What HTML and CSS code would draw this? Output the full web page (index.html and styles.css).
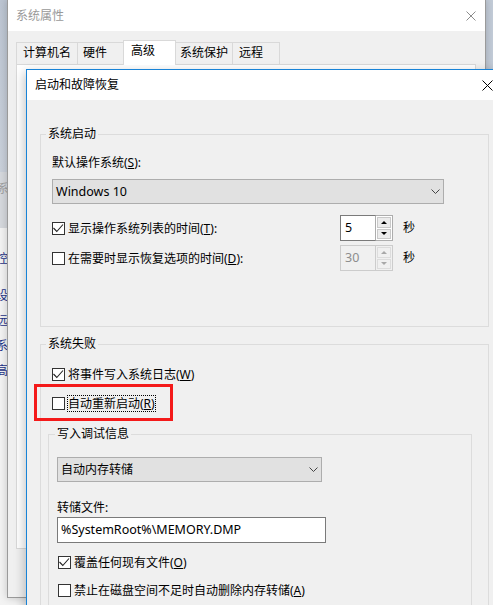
FILE: index.html
```html
<!DOCTYPE html>
<html lang="zh-CN">

<head>
    <meta charset="UTF-8">
    <meta name="viewport" content="width=device-width, initial-scale=1.0">
    <title>启动和故障恢复</title>
    <link rel="stylesheet" href="styles.css">
</head>

<body>
    <div class="desktop">
        <!-- 控制面板 (最底层，只露出左边一条) -->
        <div class="cp-window">
            <div class="cp-head"></div>
            <div class="cp-crumb">系统</div>
            <div class="cp-nav">
                <div class="cp-link">控制面板主页</div>
                <div class="cp-link first">设备管理器</div>
                <div class="cp-link">远程设置</div>
                <div class="cp-link">系统保护</div>
                <div class="cp-link">高级系统设置</div>
            </div>
        </div>

        <!-- 系统属性 -->
        <div class="window props">
            <div class="titlebar">
                <span class="title">系统属性</span>
                <svg class="close" width="10" height="10" viewBox="0 0 10 10">
                    <path d="M0.5 0.5L9.5 9.5M9.5 0.5L0.5 9.5" />
                </svg>
            </div>
            <div class="props-body">
                <div class="tabs">
                    <div class="tab t1">计算机名</div>
                    <div class="tab t2">硬件</div>
                    <div class="tab t3 active">高级</div>
                    <div class="tab t4">系统保护</div>
                    <div class="tab t5">远程</div>
                </div>
                <div class="tab-page"></div>
            </div>
        </div>

        <!-- 启动和故障恢复 -->
        <div class="window dialog">
            <div class="titlebar">
                <span class="title">启动和故障恢复</span>
                <svg class="close" width="11" height="11" viewBox="0 0 11 11">
                    <path d="M0.5 0.5L10.5 10.5M10.5 0.5L0.5 10.5" />
                </svg>
            </div>
            <div class="dialog-body">
                <fieldset class="group">
                    <legend>系统启动</legend>
                    <div class="group-body startup">
                        <div class="label">默认操作系统(<u>S</u>):</div>
                        <div class="select os-select">
                            <span>Windows 10</span>
                            <svg width="9" height="5" viewBox="0 0 9 5">
                                <polyline points="0.5,0.5 4.5,4.5 8.5,0.5" />
                            </svg>
                        </div>
                        <div class="row">
                            <div class="check checked">
                                <span class="box"><svg width="11" height="11" viewBox="0 0 11 11">
                                        <polyline points="0.5,5 3.8,8.5 10,1.5" />
                                    </svg></span>
                                <span class="text">显示操作系统列表的时间(<u>T</u>):</span>
                            </div>
                            <div class="spin">
                                <span class="spin-value">5</span>
                                <span class="spin-btns"><span class="btn up"><i></i></span><span class="btn down"><i></i></span></span>
                            </div>
                            <span class="unit">秒</span>
                        </div>
                        <div class="row second">
                            <div class="check">
                                <span class="box"></span>
                                <span class="text">在需要时显示恢复选项的时间(<u>D</u>):</span>
                            </div>
                            <div class="spin disabled">
                                <span class="spin-value">30</span>
                                <span class="spin-btns"><span class="btn up"><i></i></span><span class="btn down"><i></i></span></span>
                            </div>
                            <span class="unit">秒</span>
                        </div>
                    </div>
                </fieldset>

                <fieldset class="group failure-group">
                    <legend>系统失败</legend>
                    <div class="group-body failure">
                        <div class="check check-row log-row checked">
                            <span class="box"><svg width="11" height="11" viewBox="0 0 11 11">
                                    <polyline points="0.5,5 3.8,8.5 10,1.5" />
                                </svg></span>
                            <span class="text">将事件写入系统日志(<u>W</u>)</span>
                        </div>
                        <div class="check check-row restart-row">
                            <span class="box"></span>
                            <span class="text focus">自动重新启动(<u>R</u>)</span>
                        </div>

                        <fieldset class="group sub">
                            <legend>写入调试信息</legend>
                            <div class="group-body">
                                <div class="select dump-select">
                                    <span>自动内存转储</span>
                                    <svg width="9" height="5" viewBox="0 0 9 5">
                                        <polyline points="0.5,0.5 4.5,4.5 8.5,0.5" />
                                    </svg>
                                </div>
                                <div class="label dump-label">转储文件:</div>
                                <div class="input">%SystemRoot%\MEMORY.DMP</div>
                                <div class="check check-row over-row checked">
                                    <span class="box"><svg width="11" height="11" viewBox="0 0 11 11">
                                            <polyline points="0.5,5 3.8,8.5 10,1.5" />
                                        </svg></span>
                                    <span class="text">覆盖任何现有文件(<u>O</u>)</span>
                                </div>
                                <div class="check check-row low-row">
                                    <span class="box"></span>
                                    <span class="text">禁止在磁盘空间不足时自动删除内存转储(<u>A</u>)</span>
                                </div>
                            </div>
                        </fieldset>
                    </div>
                </fieldset>
            </div>
        </div>

        <!-- 红框标注 -->
        <div class="mark"></div>
    </div>
</body>

</html>
```

FILE: styles.css
```css
* {
    margin: 0;
    padding: 0;
    box-sizing: border-box;
}

body {
    width: 493px;
    height: 605px;
    overflow: hidden;
    font-family: "Noto Sans", "Noto Sans CJK SC", sans-serif;
    font-size: 12px;
    line-height: 16px;
    color: #000;
    background: #c3ccd8;
}

.desktop {
    position: relative;
    width: 493px;
    height: 605px;
    overflow: hidden;
}

/* 控制面板 */
.cp-window {
    position: absolute;
    left: -193px;
    top: 0;
    width: 493px;
    height: 605px;
    background: #f3f3f3;
}

.cp-head {
    height: 172px;
    background: linear-gradient(#bcc5d2, #c9d0da);
}

.cp-crumb {
    height: 56px;
    padding: 9px 0 0 190px;
    background: #d5d8dd;
    color: #a0a0a0;
}

.cp-nav {
    padding: 23px 0 0 189px;
    color: #1e3287;
}

.cp-link + .cp-link {
    margin-top: 9px;
}

.cp-link.first {
    margin-top: 21px;
}

/* 窗口通用 */
.window {
    position: absolute;
    background: #f0f0f0;
}

.titlebar {
    display: flex;
    align-items: center;
    justify-content: space-between;
    background: #fff;
}

.close path {
    stroke: #000;
    stroke-width: 1;
    fill: none;
}

/* 系统属性 */
.props {
    left: 7px;
    top: -1px;
    width: 479px;
    height: 599px;
    border: 1px solid #9a9a9a;
    box-shadow: 0 0 8px rgba(0, 0, 0, 0.2);
}

.props .titlebar {
    height: 31px;
    padding: 0 9px 0 8px;
}

.props .title {
    color: #999;
}

.props .close path {
    stroke: #8c8c8c;
}

.props-body {
    padding: 9px 0 0 8px;
}

.tabs {
    display: flex;
    align-items: flex-end;
    height: 24px;
}

.tab {
    height: 22px;
    padding-left: 6px;
    line-height: 20px;
    border: 1px solid #d9d9d9;
    border-bottom: 0;
    background: #f0f0f0;
}

.tab.active {
    position: relative;
    z-index: 1;
    height: 25px;
    margin-bottom: -1px;
    padding-left: 7px;
    line-height: 20px;
    background: #fff;
}

.t1 {
    width: 62px;
    margin-right: -1px;
}

.t2 {
    width: 49px;
    margin-right: -3px;
    padding-left: 5px;
}

.t3 {
    width: 53px;
    margin-right: -2px;
}

.t4 {
    width: 59px;
    margin-right: -1px;
    padding-left: 5px;
}

.t5 {
    width: 48px;
}

.tab-page {
    width: 460px;
    height: 485px;
    border: 1px solid #d9d9d9;
    background: #fff;
}

/* 启动和故障恢复 */
.dialog {
    left: 26px;
    top: 69px;
    width: 478px;
    height: 560px;
    border: 1px solid #1883d7;
    box-shadow: -2px 3px 10px rgba(0, 0, 0, 0.22);
}

.dialog .titlebar {
    height: 30px;
    padding: 0 10px 0 8px;
}

.dialog-body {
    padding: 26px 14px 0 13px;
}

.group {
    border: 1px solid #dcdcdc;
    padding: 0;
    min-width: 0;
}

.group legend {
    margin-left: 5px;
    padding: 0 2px;
    line-height: 16px;
}

.group-body {
    padding: 0 11px;
}

.startup {
    padding-bottom: 55px;
}

.label {
    margin-top: 13px;
}

.select {
    display: flex;
    align-items: center;
    justify-content: space-between;
    height: 25px;
    padding: 0 3px 0 3px;
    border: 1px solid #adadad;
    background: #e1e1e1;
}

.select polyline {
    fill: none;
    stroke: #444;
    stroke-width: 1;
}

.os-select {
    width: 392px;
    margin-top: 8px;
    font-size: 12.5px;
}

.row {
    display: flex;
    align-items: center;
    height: 26px;
    margin-top: 11px;
}

.row.second {
    margin-top: 4px;
}

.check {
    display: flex;
    align-items: center;
}

.row .check {
    width: 288px;
    flex: none;
}

.box {
    display: flex;
    flex: none;
    width: 13px;
    height: 13px;
    border: 1px solid #333;
    background: #fff;
}

.box polyline {
    fill: none;
    stroke: #222;
    stroke-width: 1.1;
}

.check .text {
    margin-left: 2px;
    line-height: 15px;
    border: 1px dotted transparent;
}

.check .text.focus {
    border-color: #000;
}

/* 数字框 */
.spin {
    display: flex;
    width: 53px;
    height: 26px;
    flex: none;
}

.spin-value {
    width: 36px;
    padding-left: 4px;
    line-height: 24px;
    font-size: 12.5px;
    border: 1px solid #7a7a7a;
    border-right-color: #adadad;
    background: #fff;
}

.spin-btns {
    display: flex;
    flex-direction: column;
    gap: 1px;
    width: 17px;
    padding: 1px;
    border: 1px solid #adadad;
    border-left: 0;
    background: #fff;
}

.spin-btns .btn {
    display: flex;
    flex: 1;
    align-items: center;
    justify-content: center;
    border: 1px solid #c9c9c9;
    background: #ececec;
}

.btn i {
    width: 0;
    height: 0;
    border-left: 3px solid transparent;
    border-right: 3px solid transparent;
}

.btn.up i {
    border-bottom: 3px solid #000;
}

.btn.down i {
    border-top: 3px solid #000;
}

.spin.disabled .spin-value {
    color: #8d8d8d;
    border-color: #cccccc;
    background: #f0f0f0;
}

.spin.disabled .spin-btns {
    border-color: #cccccc;
    background: #f0f0f0;
}

.spin.disabled .btn {
    border-color: #dcdcdc;
    background: #f0f0f0;
}

.spin.disabled .btn.up i {
    border-bottom-color: #a8a8a8;
}

.spin.disabled .btn.down i {
    border-top-color: #a8a8a8;
}

.unit {
    margin-left: 10px;
}

/* 系统失败 */
.failure-group {
    margin-top: 9px;
}

.failure {
    padding-bottom: 60px;
}

.check-row {
    height: 20px;
}

.log-row {
    margin-top: 12px;
}

.restart-row {
    margin-top: 9px;
}

.group.sub {
    width: 424px;
    margin: 13px 0 0 -4px;
}

.sub legend {
    margin-left: 6px;
}

.sub .group-body {
    padding: 0 0 40px 8px;
}

.dump-select {
    width: 265px;
    margin-top: 15px;
}

.dump-label {
    margin-top: 18px;
}

.input {
    width: 269px;
    height: 26px;
    margin-top: 1px;
    padding-left: 3px;
    line-height: 24px;
    font-size: 12.5px;
    border: 1px solid #7a7a7a;
    background: #fff;
}

.over-row {
    margin-top: 9px;
    padding-left: 1px;
}

.low-row {
    margin-top: 8px;
    padding-left: 1px;
}

/* 红框 */
.mark {
    position: absolute;
    left: 34px;
    top: 384px;
    width: 139px;
    height: 37px;
    border: 3px solid #f41a1a;
}
```
